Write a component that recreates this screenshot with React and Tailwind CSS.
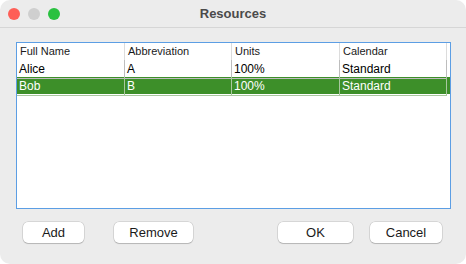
import React, { useState } from 'react';

const columns = ['Full Name', 'Abbreviation', 'Units', 'Calendar'];

const resources = [
  { name: 'Alice', abbr: 'A', units: '100%', calendar: 'Standard' },
  { name: 'Bob', abbr: 'B', units: '100%', calendar: 'Standard' },
];

const Button = ({ label, width }) => (
  <button
    className={`h-[21px] ${width} rounded-[5px] bg-white text-[13px] text-[#1a1a1a] shadow-[0_0_0_0.5px_rgba(0,0,0,0.18),0_1px_1px_rgba(0,0,0,0.15)]`}
  >
    {label}
  </button>
);

const App = () => {
  const [selected, setSelected] = useState(1);

  return (
    <div className="w-[466px] h-[264px] bg-white" style={{ fontFamily: '"Liberation Sans", Arial, sans-serif' }}>
      <div className="w-full h-full rounded-[10px] bg-[#ececec] flex flex-col overflow-hidden">
        {/* title bar */}
        <div className="h-[28px] flex items-center relative border-b border-[#d6d6d6] shrink-0">
          <div className="flex gap-[8px] pl-[8px]">
            <span className="w-[12px] h-[12px] rounded-full bg-[#fe5f57]" />
            <span className="w-[12px] h-[12px] rounded-full bg-[#cfcfcf]" />
            <span className="w-[12px] h-[12px] rounded-full bg-[#29c13f]" />
          </div>
          <div className="absolute inset-0 flex items-center justify-center text-[13px] font-bold text-[#4a4a4a]">
            Resources
          </div>
        </div>

        {/* table */}
        <div className="mt-[14px] ml-[16px] mr-[15px] h-[167px] border border-[#5c9ee4] bg-white">
          <div className="grid grid-cols-[108px_107px_108px_107px] h-[17px] items-center">
            {columns.map((c) => (
              <div key={c} className="h-[17px] pl-[3px] text-[11px] text-[#1a1a1a] flex items-center border-r border-[#dcdcdc]">
                {c}
              </div>
            ))}
          </div>
          {resources.map((r, i) => {
            const sel = i === selected;
            return (
              <div
                key={r.name}
                onClick={() => setSelected(i)}
                className={`grid grid-cols-[108px_107px_108px_107px] h-[17px] ${sel ? 'bg-[#3d8f29] text-white' : 'text-black'}`}
              >
                {[r.name, r.abbr, r.units, r.calendar].map((v, j) => (
                  <div
                    key={j}
                    className={`pl-[2px] text-[12px] flex items-center border-r border-b ${sel ? 'border-[#a9c79f]' : 'border-[#bdbdbd]'}`}
                  >
                    {v}
                  </div>
                ))}
              </div>
            );
          })}
        </div>

        {/* buttons */}
        <div className="mt-[13px] px-[23px] flex justify-between">
          <div className="flex gap-[30px]">
            <Button label="Add" width="w-[61px]" />
            <Button label="Remove" width="w-[79px]" />
          </div>
          <div className="flex gap-[17px] mr-[1px]">
            <Button label="OK" width="w-[75px]" />
            <Button label="Cancel" width="w-[72px]" />
          </div>
        </div>
      </div>
    </div>
  );
};

export default App;
